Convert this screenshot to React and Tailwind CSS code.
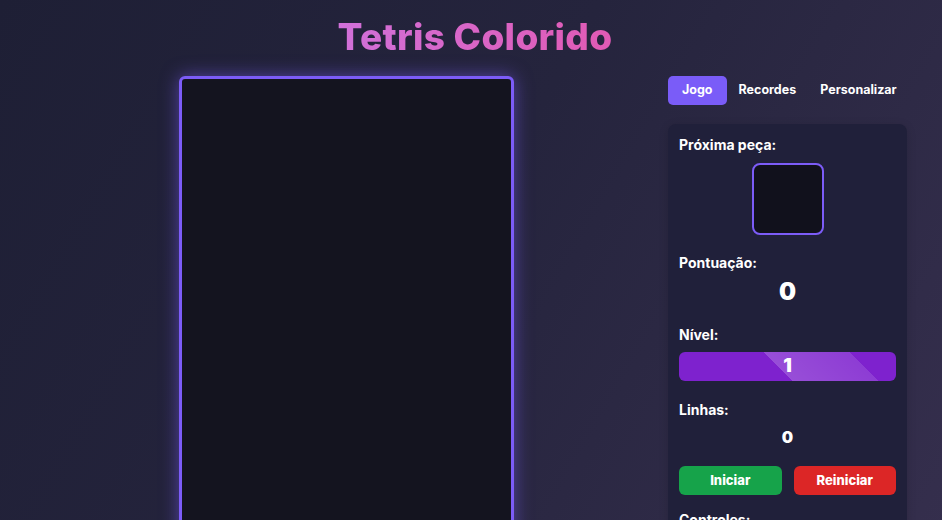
import React from 'react';

const Stat = ({ label, children, className = '' }) => (
  <div className={className}>
    <h3 className="text-[14px] leading-5 font-bold text-white">{label}</h3>
    {children}
  </div>
);

export default function App() {
  return (
    <div className="min-h-screen w-full overflow-hidden bg-[linear-gradient(120deg,#1e1f35_0%,#25243d_45%,#37304f_100%)] font-['Inter',sans-serif] text-white">
      <h1 className="pt-[15px] pl-2 text-center text-[37px] leading-[44px] font-extrabold tracking-[0.3px]">
        <span className="bg-[linear-gradient(90deg,#d170d9,#e15ab4)] bg-clip-text text-transparent">Tetris Colorido</span>
      </h1>

      <div className="mt-[17px] flex items-start pl-[179px]">
        {/* tabuleiro */}
        <div className="h-[610px] w-[335px] shrink-0 rounded-[6px] border-[3px] border-[#7c5cf7] bg-[#14141f] shadow-[0_0_18px_rgba(124,92,247,0.55)]" />

        {/* painel lateral */}
        <div className="ml-[154px] w-[239px] shrink-0">
          <div className="flex text-[12.5px] font-bold">
            <button className="h-[29px] rounded-[5px] bg-[#7a5cf8] px-[14px] text-white">Jogo</button>
            <button className="h-[29px] px-[12px] text-white">Recordes</button>
            <button className="h-[29px] px-[12px] text-white">Personalizar</button>
          </div>

          <div className="mt-[19px] rounded-[8px] bg-[#20203a] px-[11px] pt-[11px] pb-4 shadow-[0_2px_10px_rgba(0,0,0,0.15)]">
            <Stat label="Próxima peça:">
              <div className="mx-auto mt-2 h-[72px] w-[72px] rounded-[8px] border-2 border-[#7c5cf7] bg-[#11111c]" />
            </Stat>

            <Stat label="Pontuação:" className="mt-[18px]">
              <p className="mt-[3px] text-center text-[24px] leading-8 font-black">0</p>
            </Stat>

            <Stat label="Nível:" className="mt-[17px]">
              <div className="mt-[7px] flex h-[29px] items-center justify-center rounded-[6px] bg-[#7e22ce] bg-[linear-gradient(45deg,transparent_46%,rgba(255,255,255,0.2)_46%,rgba(255,255,255,0.12)_81%,transparent_81%)] text-[19px] font-black">
                1
              </div>
            </Stat>

            <Stat label="Linhas:" className="mt-[19px]">
              <p className="mt-[5px] text-center text-[16px] leading-6 font-black">0</p>
            </Stat>

            <div className="mt-[17px] grid grid-cols-2 gap-3">
              <button className="h-[29px] rounded-[6px] bg-[#16a34a] text-[13px] font-extrabold text-white">Iniciar</button>
              <button className="h-[29px] rounded-[6px] bg-[#dc2626] text-[13px] font-extrabold text-white">Reiniciar</button>
            </div>

            <Stat label="Controles:" className="mt-[15px]">
              <p className="mt-2 text-[13px] text-gray-300">Setas para mover</p>
            </Stat>
          </div>
        </div>
      </div>
    </div>
  );
}
